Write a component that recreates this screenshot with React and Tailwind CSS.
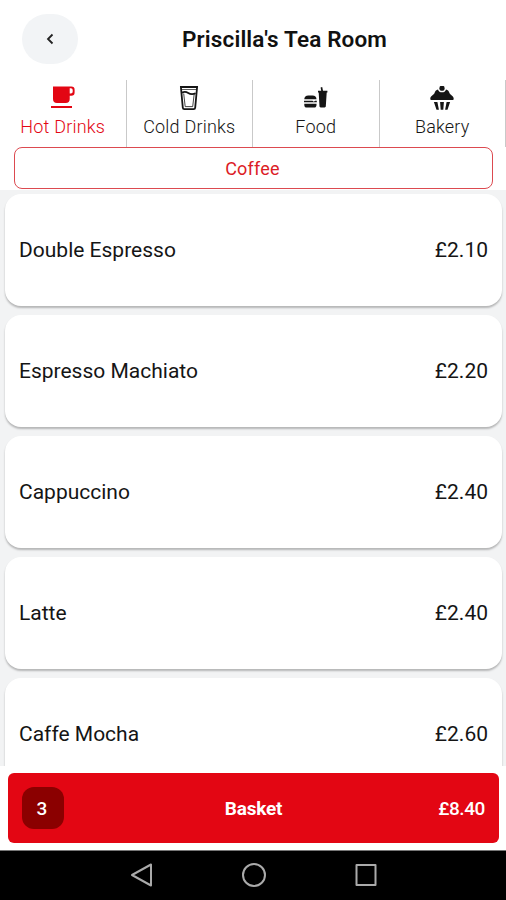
import React, { useState } from 'react';

const HotDrinkIcon = () => (
  <svg className="w-6 h-6" viewBox="0 0 24 24" fill="currentColor">
    <path
      fillRule="evenodd"
      d="M2 0.500H20.300a3.300 3.300 0 0 1 3.300 3.300v2.700a3.300 3.300 0 0 1-3.300 3.300h-1.600v3.200a4 4 0 0 1-4 4H6a4 4 0 0 1-4-4zM18.700 2.300v5.200h1.200a1.800 1.800 0 0 0 1.800-1.800V4.100a1.800 1.800 0 0 0-1.800-1.800z"
    />
    <path d="M0 20h21v2H0z" />
  </svg>
);

const ColdDrinkIcon = () => (
  <svg className="w-6 h-6" viewBox="0 0 24 24" fill="none" stroke="currentColor" strokeWidth="1.8">
    <path d="M3.900 1h16.200l-1.900 20.600a1.600 1.600 0 0 1-1.600 1.500H7.400a1.600 1.600 0 0 1-1.600-1.500z" />
    <path d="M4 3.500h16" strokeWidth="0.7" />
    <path d="M5 6.600c2.200-1 4-1 6.200 0.400s4.600 1.600 7.400 0.300" />
    <path d="M6.700 7.500l1.500 13.100h7.500l1.500-12.600" strokeWidth="0.8" />
  </svg>
);

const FoodIcon = () => (
  <svg className="w-6 h-6" viewBox="0 0 24 24" fill="currentColor">
    <path d="M0.300 13.300c0-2.500 1.500-3.800 4-3.800h4.200c2.500 0 4 1.300 4 3.800z" />
    <path d="M0 14.800h8.500l1.300 0.900 1.300-0.900h1.700v1.500H0z" />
    <path d="M0.300 17.800h12.200v1.100c0 1.700-0.900 2.600-2.500 2.600H2.800c-1.600 0-2.500-0.900-2.500-2.600z" />
    <path d="M14 4.800h3.200L16.600 1.600l1.600-0.500 0.800 3.700h4.400v1.700h-0.700l-0.900 13.800c0 0.700-0.500 1.200-1.200 1.200h-3.900c-0.700 0-1.200-0.500-1.200-1.200L14.700 6.500H14z" />
  </svg>
);

const BakeryIcon = () => (
  <svg className="w-6 h-6" viewBox="0 0 24 24" fill="currentColor">
    <path d="M8 3.400C6.200 3.800 4.800 5.300 4.500 7.300 3.500 9 0.300 10.300 0.300 12.800c0 0.800 0.400 1.200 1.200 1.200h21c0.800 0 1.200-0.400 1.200-1.200 0-2.500-3.200-3.800-4.200-5.500-0.300-2-1.700-3.500-3.500-3.900a4.200 4.200 0 0 1-8 0z" />
    <circle cx="12" cy="2.200" r="2.600" />
    <path d="M3.900 16h3.500l1.500 7.700H6.500zM10.100 16h3.800l-0.600 7.700h-2.600zM16.600 16h3.500l-2.600 7.700h-2.400z" />
  </svg>
);

const TABS = [
  { id: 'hot', label: 'Hot Drinks', icon: HotDrinkIcon },
  { id: 'cold', label: 'Cold Drinks', icon: ColdDrinkIcon },
  { id: 'food', label: 'Food', icon: FoodIcon },
  { id: 'bakery', label: 'Bakery', icon: BakeryIcon },
];

const ITEMS = [
  { name: 'Double Espresso', price: '£2.10' },
  { name: 'Espresso Machiato', price: '£2.20' },
  { name: 'Cappuccino', price: '£2.40' },
  { name: 'Latte', price: '£2.40' },
  { name: 'Caffe Mocha', price: '£2.60' },
];

const Header = () => (
  <header className="relative flex h-20 shrink-0 items-start justify-center">
    <button
      type="button"
      aria-label="Back"
      className="absolute left-[22px] top-[14px] flex h-[50px] w-14 items-center justify-center rounded-[26px] bg-[#f2f4f6]"
    >
      <svg className="h-3 w-2" viewBox="0 0 8 12" fill="none" stroke="#222" strokeWidth="1.8">
        <path d="M6.500 1.500L2 6l4.500 4.500" />
      </svg>
    </button>
    <h1 className="ml-[63px] mt-[23px] text-[22.500px] leading-8 font-semibold tracking-[0.150px] text-[#111]">
      Priscilla's Tea Room
    </h1>
  </header>
);

const CategoryTabs = ({ active, onChange }) => (
  <nav className="flex h-[67px] shrink-0">
    {TABS.map(({ id, label, icon: Icon }) => (
      <button
        key={id}
        type="button"
        onClick={() => onChange(id)}
        className={`flex w-[126.500px] shrink-0 flex-col items-center border-r border-[#c9c9c9] pt-1.5 ${
          active === id ? 'text-[#e30613]' : 'text-[#151515]'
        }`}
      >
        <Icon />
        <span className="mt-[5px] text-lg leading-6 font-[350] tracking-[0.2px] whitespace-nowrap">{label}</span>
      </button>
    ))}
  </nav>
);

const MenuItem = ({ name, price }) => (
  <li className="flex h-28 shrink-0 items-center justify-between rounded-2xl bg-white pt-0.5 pr-3.5 pl-3.5 text-[21px] text-[#151515] shadow-[0_2px_2px_rgba(0,0,0,0.25)]">
    <span>{name}</span>
    <span>{price}</span>
  </li>
);

const BasketBar = ({ count, total }) => (
  <div className="h-[84px] shrink-0 bg-white pt-[7px] pl-2">
    <button
      type="button"
      className="grid h-[70px] w-[491px] grid-cols-3 items-center rounded-md bg-[#e30613] px-3.5 text-white"
    >
      <span className="flex h-[42px] w-[42px] items-center justify-center rounded-xl bg-[#8b0000] pt-0.5 pr-0.5 text-[19px] font-medium">
        {count}
      </span>
      <span className="pt-0.5 text-center text-[19px] font-bold tracking-[-0.2px]">Basket</span>
      <span className="pt-0.5 text-right text-[19px] font-medium tracking-[-0.4px]">{total}</span>
    </button>
  </div>
);

const SystemNav = () => (
  <div className="flex h-[50px] shrink-0 items-center justify-center gap-[88px] border-t border-[#777] bg-black pb-0.5 pl-px text-[#aaa]">
    <svg className="h-6 w-6" viewBox="0 0 24 24" fill="none" stroke="currentColor" strokeWidth="2" strokeLinejoin="round">
      <path d="M21 1.500v21L2 12z" />
    </svg>
    <svg className="h-6 w-6" viewBox="0 0 24 24" fill="none" stroke="currentColor" strokeWidth="2">
      <circle cx="12" cy="12" r="11" />
    </svg>
    <svg className="h-6 w-6" viewBox="0 0 24 24" fill="none" stroke="currentColor" strokeWidth="2" strokeLinejoin="round">
      <path d="M2.500 2h19v20h-19z" />
    </svg>
  </div>
);

export default function App() {
  const [active, setActive] = useState('hot');

  return (
    <div className="flex h-[900px] w-[506px] flex-col overflow-hidden bg-white font-['Roboto',sans-serif]">
      <Header />
      <CategoryTabs active={active} onChange={setActive} />

      {/* Sub category */}
      <div className="h-[43px] shrink-0 px-3.5">
        <button
          type="button"
          className="flex h-[42px] w-[479px] items-center justify-center rounded-lg border border-[#dc4a50] pt-0.5 pr-0.5 text-lg tracking-[0.2px] text-[#dc1c26]"
        >
          Coffee
        </button>
      </div>

      <ul className="flex h-[576px] shrink-0 flex-col gap-[9px] overflow-hidden bg-[#f2f3f4] pt-1 pr-[4px] pl-[5px]">
        {ITEMS.map((item) => (
          <MenuItem key={item.name} name={item.name} price={item.price} />
        ))}
      </ul>

      <BasketBar count={3} total="£8.40" />
      <SystemNav />
    </div>
  );
}
